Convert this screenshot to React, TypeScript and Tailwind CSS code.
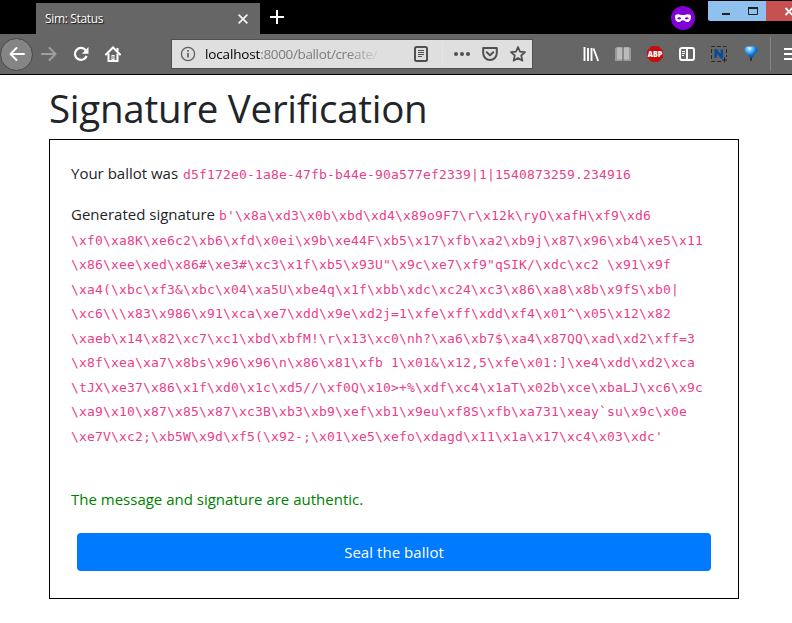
import React from "react";

const firstLine = String.raw`b'\x8a\xd3\x0b\xbd\xd4\x89o9F7\r\x12k\ryO\xafH\xf9\xd6`;

const signatureLines = [
  String.raw`\xf0\xa8K\xe6c2\xb6\xfd\x0ei\x9b\xe44F\xb5\x17\xfb\xa2\xb9j\x87\x96\xb4\xe5\x11`,
  String.raw`\x86\xee\xed\x86#\xe3#\xc3\x1f\xb5\x93U"\x9c\xe7\xf9"qSIK/\xdc\xc2 \x91\x9f`,
  String.raw`\xa4(\xbc\xf3&\xbc\x04\xa5U\xbe4q\x1f\xbb\xdc\xc24\xc3\x86\xa8\x8b\x9fS\xb0|`,
  String.raw`\xc6\\\x83\x986\x91\xca\xe7\xdd\x9e\xd2j=1\xfe\xff\xdd\xf4\x01^\x05\x12\x82`,
  String.raw`\xaeb\x14\x82\xc7\xc1\xbd\xbfM!\r\x13\xc0\nh?\xa6\xb7$\xa4\x87QQ\xad\xd2\xff=3`,
  String.raw`\x8f\xea\xa7\x8bs\x96\x96\n\x86\x81\xfb 1\x01&\x12,5\xfe\x01:]\xe4\xdd\xd2\xca`,
  String.raw`\tJX\xe37\x86\x1f\xd0\x1c\xd5//\xf0Q\x10>+%\xdf\xc4\x1aT\x02b\xce\xbaLJ\xc6\x9c`,
  String.raw`\xa9\x10\x87\x85\x87\xc3B\xb3\xb9\xef\xb1\x9eu\xf8S\xfb\xa731\xeay${"`"}su\x9c\x0e`,
  String.raw`\xe7V\xc2;\xb5W\x9d\xf5(\x92-;\x01\xe5\xefo\xdagd\x11\x1a\x17\xc4\x03\xdc'`,
];

function Cell({ children }: { children: React.ReactNode }) {
  return <div className="flex h-8 w-8 shrink-0 items-center justify-center">{children}</div>;
}

function TabStrip() {
  return (
    <div className="flex h-[34px] bg-black">
      <div className="mt-[3px] ml-9 flex h-[31px] w-[224px] items-center bg-[#666] pr-3 pl-[9px]">
        <span className="grow text-[12px] tracking-[-0.350px] text-white [text-shadow:1px_1px_1px_#111]">Sim: Status</span>
        <svg width="10" height="10" viewBox="0 0 10 10" stroke="#f5f5f5" strokeWidth="1.7">
          <path d="M.6.6l8.800 8.800M9.400.6L.6 9.400" />
        </svg>
      </div>
      <svg className="mt-[10px] ml-[10px]" width="14" height="14" viewBox="0 0 14 14" stroke="#fff" strokeWidth="2">
        <path d="M7 0v14M0 7h14" />
      </svg>
      <svg className="mt-[6px] ml-[387px]" width="24" height="24" viewBox="0 0 24 24">
        <circle cx="12" cy="12" r="12" fill="#8000d7" />
        <path
          fill="#fff"
          fillRule="evenodd"
          d="M4 10.500C4 9 5 8.200 7 8.200c2 0 3.200.8 5 .8s3-.8 5-.8c2 0 3 .8 3 2.300 0 3-1.200 5.500-3.700 5.500-2.300 0-2.800-1.700-4.300-1.700S10 16 7.700 16C5.200 16 4 13.500 4 10.500zM6.200 12.200c.8-1.400 3.200-1.400 4 .2-1 1.400-3.200 1.300-4-.2zm7.600.2c.8-1.600 3.200-1.600 4-.2-.8 1.500-3 1.600-4 .2z"
        />
      </svg>
      <div className="mt-px ml-[13px] flex h-5 w-[84px] overflow-hidden rounded-bl-[2px] bg-[#8fc1ef]">
        <svg className="w-[58px] shrink-0" width="58" height="20" viewBox="0 0 58 20" fill="none" stroke="#222">
          <path d="M14 13h8" strokeWidth="2" />
          <path d="M40.500 6.500h9v7h-9z" />
          <path d="M40 7h10" strokeWidth="2" />
        </svg>
        <svg className="shrink-0 bg-[#c75050]" width="26" height="20" viewBox="0 0 26 20" stroke="#fff" strokeWidth="1.8">
          <path d="M19.500 7l7 7M26.500 7l-7 7" />
        </svg>
      </div>
    </div>
  );
}

function AddressBar() {
  return (
    <div className="ml-[42px] flex h-[30px] w-[362px] shrink-0 items-center border border-[#505050] bg-[#dfdfdf] pl-[8px]">
      <svg width="16" height="16" viewBox="0 0 16 16" fill="none" stroke="#606060">
        <circle cx="8" cy="8" r="6.600" strokeWidth="1.300" />
        <path d="M8 7v4.500M8 4v1.700" strokeWidth="1.700" />
      </svg>
      <div className="ml-[9px] w-[182px] shrink-0 pt-px text-[13.500px] tracking-[-0.350px] whitespace-nowrap text-[#7c7c7c] [mask-image:linear-gradient(to_right,black_78%,transparent_97%)]">
        <span className="tracking-[-0.150px] text-black">localhost</span>:8000/ballot/create/
      </div>
      <svg className="ml-[26px]" width="16" height="16" viewBox="0 0 16 16" fill="none" stroke="#505050">
        <rect x="2" y="1" width="12" height="14" rx="1.500" strokeWidth="2" />
        <path d="M5 4.500h6M5 6.500h6M5 8.500h6M5 10.500h4" />
      </svg>
      <div className="ml-[13px] h-[22px] w-px bg-[#e5e5e5]" />
      <svg className="ml-[10px]" width="18" height="16" viewBox="0 0 18 16" fill="#505050">
        <circle cx="3" cy="8" r="2" />
        <circle cx="9" cy="8" r="2" />
        <circle cx="15" cy="8" r="2" />
      </svg>
      <svg className="ml-[11px]" width="16" height="16" viewBox="0 0 16 16" fill="none" stroke="#505050" strokeWidth="2" strokeLinecap="round" strokeLinejoin="round">
        <path d="M1.200 2h13.600v5.200a6.800 6.800 0 01-13.600 0z" />
        <path d="M4.800 6.300L8 9.400l3.200-3.100" />
      </svg>
      <svg className="ml-[12px]" width="16" height="16" viewBox="0 0 16 16" fill="none" stroke="#505050" strokeWidth="1.700" strokeLinejoin="round">
        <path d="M8 1l2 4.700 5 .4-3.800 3.400 1.200 5.200L8 12l-4.400 2.700 1.200-5.200L1 6.100l5-.4z" />
      </svg>
    </div>
  );
}

function Toolbar() {
  return (
    <div className="flex h-[41px] items-center overflow-hidden border-b border-black bg-[#666]">
      <div className="flex h-[33px] w-[33px] shrink-0 items-center justify-center rounded-full border border-[#484848] bg-[#858585]">
        <svg width="16" height="16" viewBox="0 0 16 16" fill="none" stroke="#fff" strokeWidth="2" strokeLinecap="round" strokeLinejoin="round">
          <path d="M15 8H1.500M7.500 2L1.500 8l6 6" />
        </svg>
      </div>
      <Cell>
        <svg width="16" height="16" viewBox="0 0 16 16" fill="none" stroke="#a0a0a0" strokeWidth="2" strokeLinecap="round" strokeLinejoin="round">
          <path d="M1 8h13.500M8.500 2l6 6-6 6" />
        </svg>
      </Cell>
      <Cell>
        <svg width="16" height="16" viewBox="0 0 16 16">
          <path d="M12.700 4.200A6 6 0 1013.600 10" fill="none" stroke="#fff" strokeWidth="2.200" />
          <path d="M15.500 1v6.700H8.800z" fill="#fff" />
        </svg>
      </Cell>
      <Cell>
        <svg width="16" height="16" viewBox="0 0 16 16">
          <path d="M1 8.500L8 1.500l7 7" fill="none" stroke="#fff" strokeWidth="2" strokeLinecap="round" />
          <path d="M11.500 2h2v4l-2-2z" fill="#fff" />
          <path d="M3.500 7.500V15h9V7.500" fill="none" stroke="#fff" strokeWidth="2" />
          <path d="M6.500 9h3v6h-3z" fill="#fff" />
          <path d="M8 10v3" stroke="#666" />
        </svg>
      </Cell>
      <AddressBar />
      <div className="ml-[42px] flex shrink-0">
        <Cell>
          <svg width="16" height="16" viewBox="0 0 16 16" stroke="#fff" strokeWidth="1.900">
            <path d="M1.500 1v14M5 2v13M8.500 2v13M10.500 2.500L15.200 15" />
          </svg>
        </Cell>
        <Cell>
          <svg width="16" height="16" viewBox="0 0 16 16">
            <path d="M0 2.500L2 1h5l1 1 1-1h5l2 1.500V15H9l-1-1-1 1H0z" fill="#999" />
            <path d="M2 1.500h5v12H2zM9 1.500h5v12H9z" fill="#bbb" />
            <path d="M8 2v13" stroke="#777" />
          </svg>
        </Cell>
        <Cell>
          <svg width="16" height="16" viewBox="0 0 16 16">
            <path d="M4.700 0h6.600L16 4.700v6.600L11.300 16H4.700L0 11.300V4.700z" fill="#c70d0d" />
            <text x="8" y="11" textAnchor="middle" fontFamily="Open Sans, sans-serif" fontSize="8" fontWeight="800" fill="#fff" textLength="14.500" lengthAdjust="spacingAndGlyphs">ABP</text>
          </svg>
        </Cell>
        <Cell>
          <svg width="16" height="16" viewBox="0 0 16 16" fill="none" stroke="#fff">
            <rect x="1" y="2" width="14" height="12" rx="2" strokeWidth="2" />
            <path d="M8 2v12" strokeWidth="2" />
            <path d="M3 5.500h3M3 7.500h3M3 9.500h2" />
          </svg>
        </Cell>
        <Cell>
          <svg width="18" height="18" viewBox="0 0 18 18">
            <path d="M11 16.500H1.500v-15h15V12" fill="none" stroke="#2a2a2a" strokeDasharray="4 2" />
            <path d="M14.500 12.500v5M12 15h5" stroke="#222" />
            <path d="M5.700 13V4.500l6.200 8.500V4.500" fill="none" stroke="#0849a0" strokeWidth="2.400" strokeLinejoin="bevel" />
          </svg>
        </Cell>
        <Cell>
          <svg width="16" height="16" viewBox="0 0 16 16">
            <defs>
              <radialGradient id="balloon" gradientUnits="userSpaceOnUse" cx="6.500" cy="2.500" r="9.500">
                <stop offset="0" stopColor="#e2f8ff" />
                <stop offset="0.350" stopColor="#55bcff" />
                <stop offset="0.700" stopColor="#0b6fd6" />
                <stop offset="1" stopColor="#0a4a98" />
              </radialGradient>
            </defs>
            <path d="M1.500 2.500L3.500.5h9l2 2v2L9.500 11.500h-3L1.500 4.500z" fill="url(#balloon)" />
            <path d="M8 11.500V15" stroke="#222" strokeWidth="1.500" />
          </svg>
        </Cell>
      </div>
      <div className="ml-[3px] h-[34px] w-px shrink-0 bg-[#858585]" />
      <svg className="ml-[13px] shrink-0" width="14" height="14" viewBox="0 0 14 14" stroke="#fff" strokeWidth="2">
        <path d="M0 2h14M0 7h14M0 12h14" />
      </svg>
    </div>
  );
}

export default function App() {
  return (
    <div className="h-[623px] w-[792px] overflow-hidden bg-white font-['Open_Sans','Noto_Sans',sans-serif] text-[#212529]">
      <TabStrip />
      <Toolbar />
      <main className="ml-[49px] w-[690px]">
        <h1 className="h-[64px] pt-[9px] text-[38.500px] leading-[48px] font-normal tracking-[-0.260px] whitespace-nowrap">Signature Verification</h1>
        <section className="h-[460px] border border-black px-[21px] pt-[21px]">
          <p className="flex h-[41px] items-baseline text-[15px] leading-6 whitespace-pre">
            <span className="w-[112px]">Your ballot was</span>
            <code className="font-['DejaVu_Sans_Mono',monospace] text-[13px] tracking-[0.174px] text-[#e83e8c]">d5f172e0-1a8e-47fb-b44e-90a577ef2339|1|1540873259.234916</code>
          </p>
          <div className="text-[15px] leading-[24.500px] whitespace-pre">
            <p className="flex items-baseline">
              <span className="w-[148px]">Generated signature</span>
              <code className="font-['DejaVu_Sans_Mono',monospace] text-[13px] tracking-[0.174px] text-[#e83e8c]">{firstLine}</code>
            </p>
            {signatureLines.map((line) => (
              <code key={line} className="block font-['DejaVu_Sans_Mono',monospace] text-[13px] tracking-[0.174px] text-[#e83e8c]">{line}</code>
            ))}
          </div>
          <p className="mt-[38px] text-[15px] leading-6 text-[#008000]">The message and signature are authentic.</p>
          <button className="mt-[22px] ml-[6px] h-[38px] w-[634px] rounded-[4px] bg-[#007bff] text-[15px] leading-6 text-white"><span className="tracking-[0.050px]">Seal the ballot</span></button>
        </section>
      </main>
    </div>
  );
}
